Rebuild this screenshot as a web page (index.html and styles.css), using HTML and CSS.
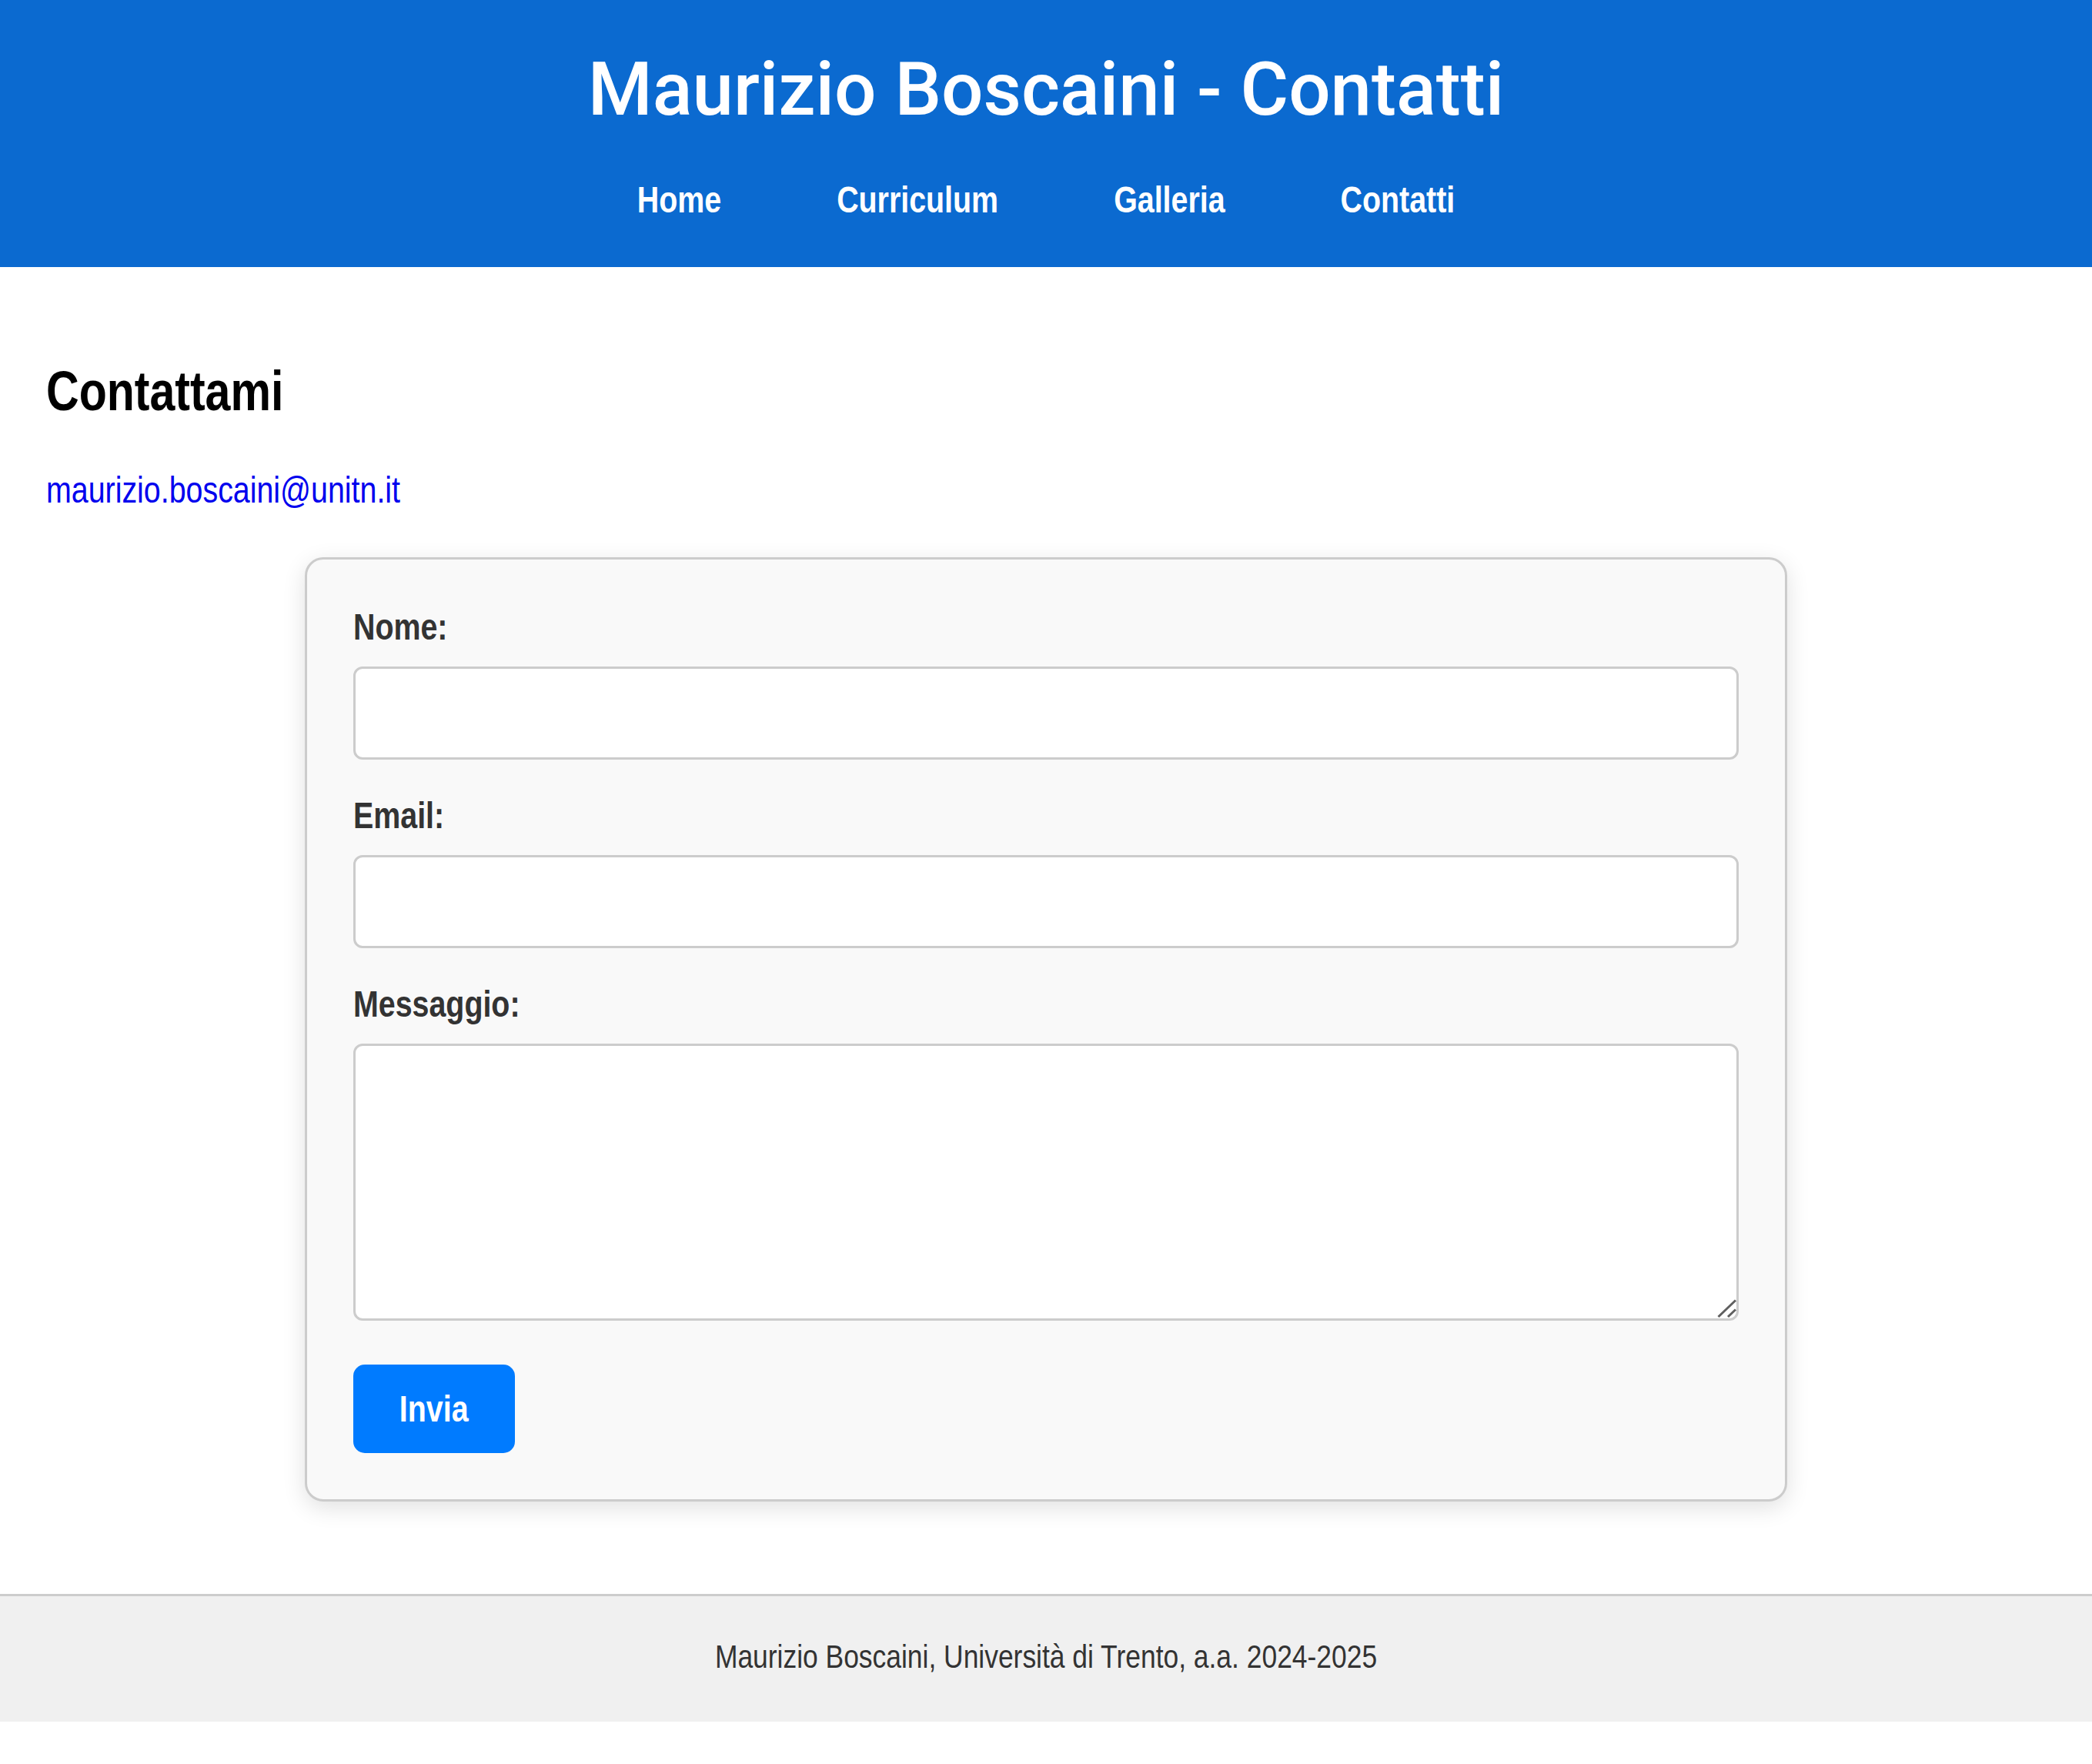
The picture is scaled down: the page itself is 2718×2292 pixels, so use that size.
FILE: index.html
```html
<!DOCTYPE html>
<html lang="it">
<head>
<meta charset="utf-8">
<title>Maurizio Boscaini - Contatti</title>
<link rel="stylesheet" href="styles.css">
</head>
<body>
<header class="site-header">
  <h1 class="site-title">Maurizio Boscaini - Contatti</h1>
  <nav class="site-nav">
    <a href="#" class="nav-link">Home</a>
    <a href="#" class="nav-link">Curriculum</a>
    <a href="#" class="nav-link">Galleria</a>
    <a href="#" class="nav-link">Contatti</a>
  </nav>
</header>
<main class="content">
  <h2 class="section-title narrow-left">Contattami</h2>
  <p class="contact-line narrow-left"><a class="mail-link" href="mailto:maurizio.boscaini@unitn.it">maurizio.boscaini@unitn.it</a></p>
  <form class="contact-form">
    <label class="field-label narrow-left" for="nome">Nome:</label>
    <input class="field-input" type="text" id="nome" name="nome">
    <label class="field-label narrow-left" for="email">Email:</label>
    <input class="field-input" type="email" id="email" name="email">
    <label class="field-label narrow-left" for="messaggio">Messaggio:</label>
    <div class="area-wrap">
      <textarea class="field-input field-area" id="messaggio" name="messaggio"></textarea>
      <svg class="resize-grip" width="26" height="26" viewBox="0 0 26 26" aria-hidden="true">
        <line x1="2.5" y1="24" x2="25" y2="2.5" stroke="#5f5f5f" stroke-width="3"/>
        <line x1="15" y1="24" x2="25" y2="14.5" stroke="#5f5f5f" stroke-width="3"/>
      </svg>
    </div>
    <button class="submit-btn" type="submit"><span class="btn-text">Invia</span></button>
  </form>
</main>
<footer class="site-footer">
  <p class="footer-text">Maurizio Boscaini, Università di Trento, a.a. 2024-2025</p>
</footer>
</body>
</html>
```
FILE: styles.css
```css
html, body {
  margin: 0;
  padding: 0;
  background: #ffffff;
}

body {
  font-family: "Liberation Sans Narrow", "Liberation Sans", Arial, sans-serif;
  font-size: 48px;
  color: #000;
}

/* the page text uses a narrow sans; emulate it by condensing Liberation Sans */
.narrow-left {
  transform: scaleX(0.82);
  transform-origin: left center;
}

.site-header {
  background: #0b6ad0;
  color: #fff;
  text-align: center;
  padding: 60px;
}

.site-title {
  font-family: Roboto, "Liberation Sans", sans-serif;
  font-weight: 500;
  font-size: 96px;
  line-height: normal;
  margin: 0 0 60px;
}

.site-nav {
  display: flex;
  justify-content: center;
  gap: 183px;
  transform: scaleX(0.82);
  transform-origin: center center;
}

.nav-link {
  color: #fff;
  text-decoration: none;
  font-weight: bold;
  font-size: 48px;
}

.content {
  padding: 60px;
}

.section-title {
  font-size: 72px;
  font-weight: bold;
  margin: 60px 0;
}

.contact-line {
  margin: 48px 0;
}

.mail-link {
  color: #0000ee;
  text-decoration: none;
}

.contact-form {
  max-width: 1800px;
  margin: 60px auto;
  padding: 60px;
  background: #f9f9f9;
  border: 3px solid #ccc;
  border-radius: 24px;
  box-shadow: 0 8px 30px rgba(0, 0, 0, 0.12);
}

.field-label {
  display: block;
  font-weight: bold;
  color: #333;
  margin-bottom: 24px;
}

.field-input {
  display: block;
  width: 100%;
  box-sizing: border-box;
  padding: 30px;
  border: 3px solid #ccc;
  border-radius: 12px;
  background: #fff;
  font-family: inherit;
  font-size: 48px;
  margin: 0 0 45px;
}

.area-wrap {
  position: relative;
  margin: 0 0 57px;
}

.field-area {
  height: 360px;
  margin: 0;
  resize: none;
}

.resize-grip {
  position: absolute;
  right: 3px;
  bottom: 3px;
  pointer-events: none;
}

.submit-btn {
  display: block;
  width: 210px;
  background: #007bff;
  color: #fff;
  border: none;
  border-radius: 15px;
  padding: 30px 0;
  font-family: inherit;
  font-weight: bold;
  font-size: 48px;
  margin: 0;
  text-align: center;
}

.btn-text {
  display: inline-block;
  transform: scaleX(0.82);
  transform-origin: center center;
}

.site-footer {
  background: #f0f0f0;
  border-top: 3px solid #ccc;
  text-align: center;
  padding: 54px 0 60px;
}

.footer-text {
  margin: 0;
  font-size: 43.2px;
  color: #333;
  transform: scaleX(0.82);
  transform-origin: center center;
}
```
